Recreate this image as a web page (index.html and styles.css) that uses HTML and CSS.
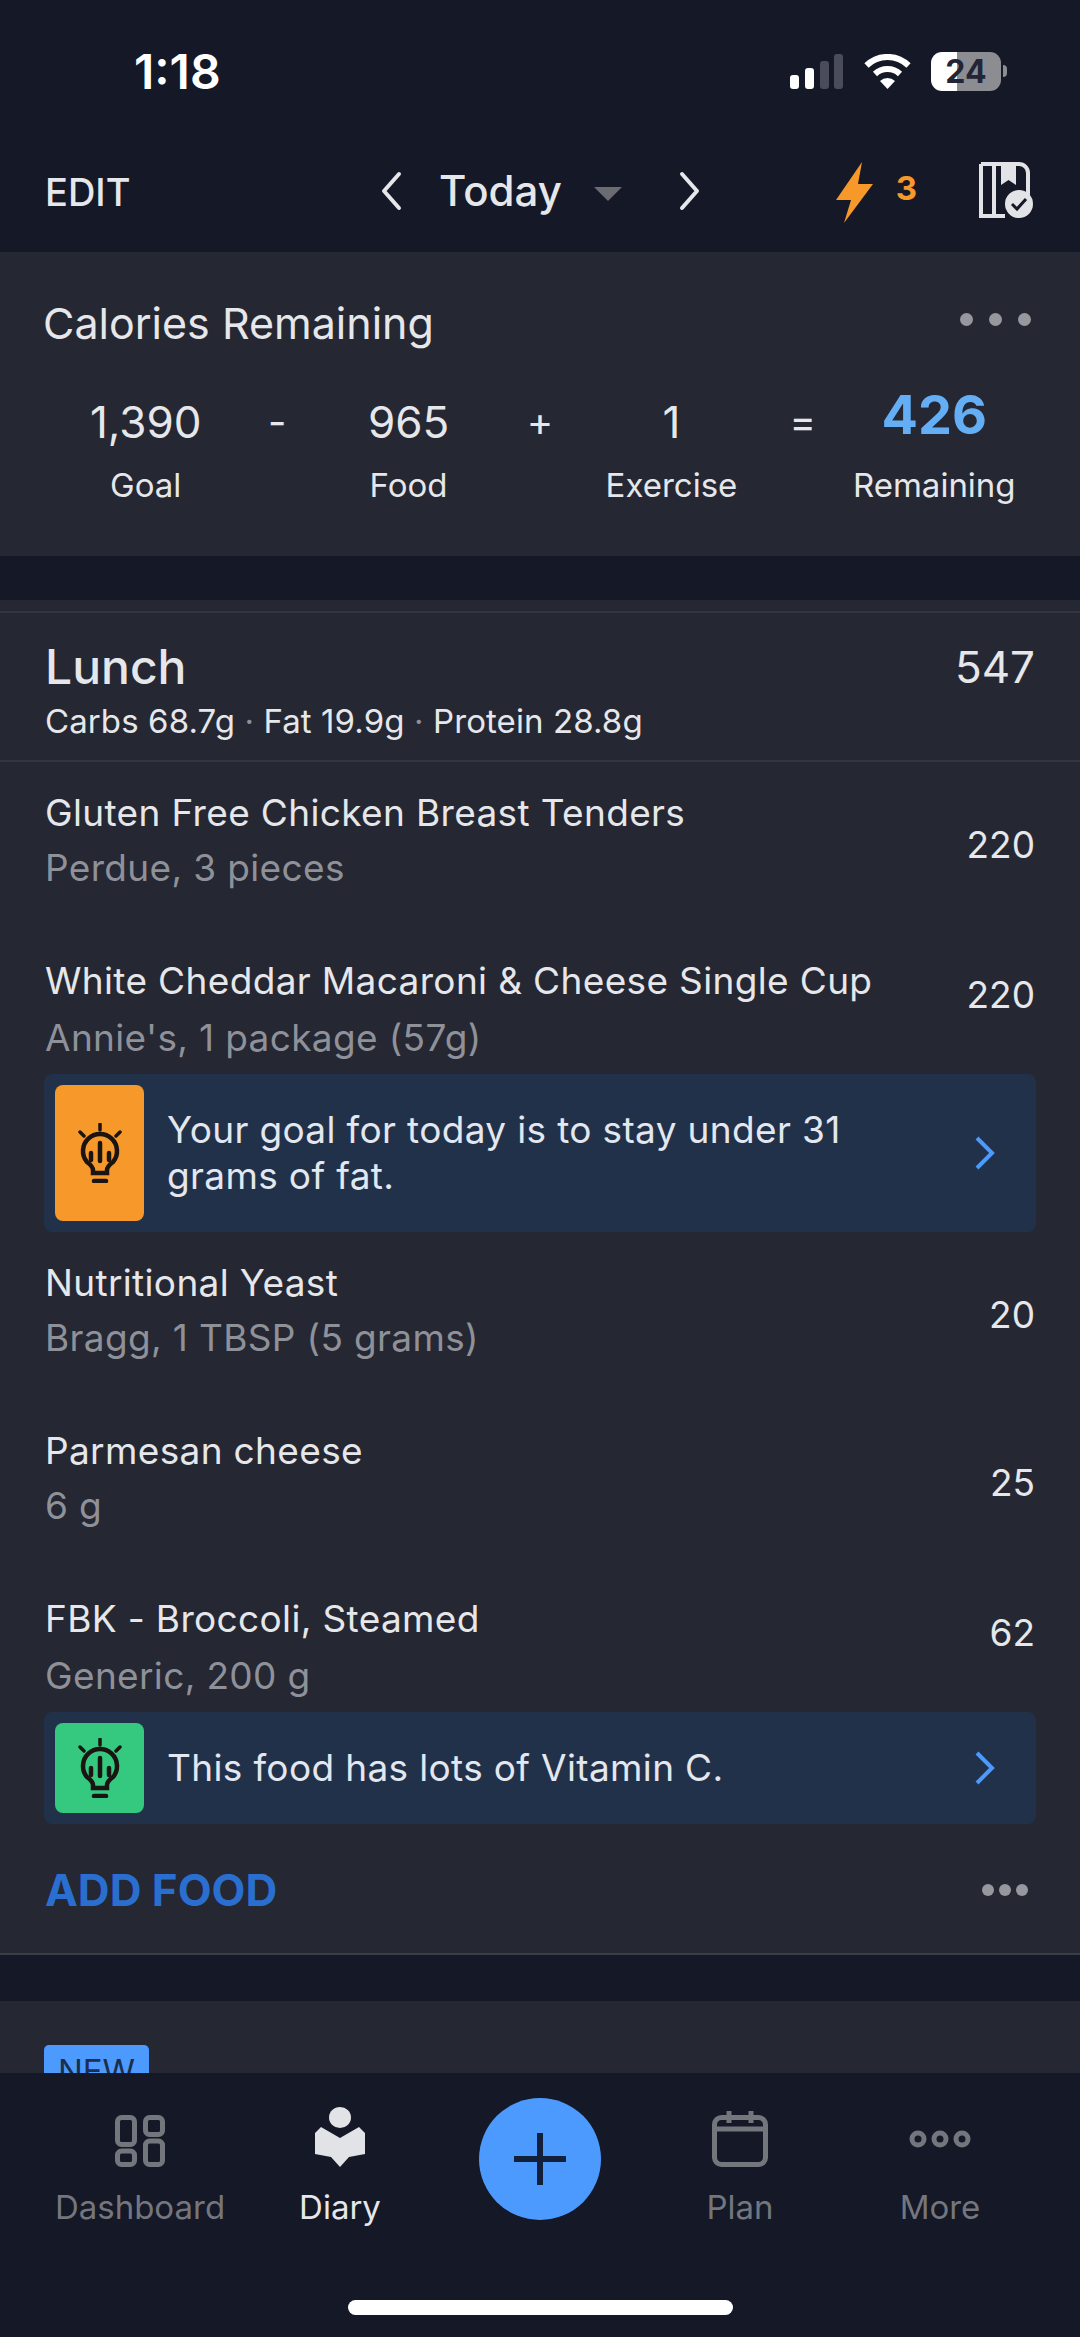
FILE: index.html
```html
<!DOCTYPE html>
<html>
<head>
  <meta charset="UTF-8">
  <title>Diary</title>
  <link rel="stylesheet" href="styles.css">
</head>
<body>
  <div class="page">
    <!-- status bar -->
    <div class="status">
      <span class="time">1:18</span>
      <div class="status-icons">
        <svg class="signal" width="53" height="35" viewBox="0 0 53 35">
          <rect x="0" y="21" width="9" height="14" rx="3" fill="#fff"/>
          <rect x="15" y="14" width="9" height="21" rx="3" fill="#fff"/>
          <rect x="30" y="7" width="9" height="28" rx="3" fill="#4a4d59"/>
          <rect x="44" y="0" width="9" height="35" rx="3" fill="#4a4d59"/>
        </svg>
        <svg class="wifi" width="47" height="35" viewBox="0 0 47 35">
          <path d="M2.500 11.500a30 30 0 0 1 42 0" fill="none" stroke="#fff" stroke-width="6"/>
          <path d="M11 20a18 18 0 0 1 25 0" fill="none" stroke="#fff" stroke-width="6"/>
          <path d="M23.500 35l-7.500-8a11 11 0 0 1 15 0z" fill="#fff"/>
        </svg>
        <div class="battery"><span>24</span></div>
        <div class="battery-nub"></div>
      </div>
    </div>

    <!-- top nav -->
    <div class="topbar">
      <span class="edit">EDIT</span>
      <div class="date-nav">
        <svg width="24" height="40" viewBox="0 0 24 40"><path d="M20 3L5 20l15 17" fill="none" stroke="#e6e7ea" stroke-width="4" stroke-linecap="round" stroke-linejoin="round"/></svg>
        <span class="today">Today</span>
        <div class="caret"></div>
        <svg width="24" height="40" viewBox="0 0 24 40"><path d="M4 3l15 17L4 37" fill="none" stroke="#e6e7ea" stroke-width="4" stroke-linecap="round" stroke-linejoin="round"/></svg>
      </div>
      <div class="top-right">
        <svg width="37" height="61" viewBox="0 0 37 61"><path d="M26 0L0 38h15L8 61l29-39H22z" fill="#f7982a"/></svg>
        <span class="streak">3</span>
        <svg class="book" width="54" height="56" viewBox="0 0 54 56">
          <path d="M2 2h38a9 9 0 0 1 9 9v24M26 54H2V2M15 3v49" fill="none" stroke="#e2e3e6" stroke-width="4"/>
          <path d="M22 3h15v20l-7.500-5-7.500 5z" fill="#e2e3e6"/>
          <circle cx="40" cy="42" r="14" fill="#e2e3e6"/>
          <path d="M33 42l5 5 9-10" fill="none" stroke="#151826" stroke-width="3"/>
        </svg>
      </div>
    </div>

    <div class="content">
      <!-- calories summary -->
      <section class="card summary">
        <div class="summary-head">
          <h2>Calories Remaining</h2>
          <div class="dots"><i></i><i></i><i></i></div>
        </div>
        <div class="calc">
          <div class="calc-col"><b>1,390</b><span>Goal</span></div>
          <div class="calc-op">-</div>
          <div class="calc-col"><b>965</b><span>Food</span></div>
          <div class="calc-op">+</div>
          <div class="calc-col"><b>1</b><span>Exercise</span></div>
          <div class="calc-op">=</div>
          <div class="calc-col calc-total"><b>426</b><span>Remaining</span></div>
        </div>
      </section>

      <!-- lunch -->
      <section class="card meal">
        <div class="meal-head">
          <div>
            <h2>Lunch</h2>
            <p>Carbs 68.7g <em>·</em> Fat 19.9g <em>·</em> Protein 28.8g</p>
          </div>
          <span class="meal-cal">547</span>
        </div>

        <div class="food">
          <div class="food-text"><div class="food-name">Gluten Free Chicken Breast Tenders</div><div class="food-sub">Perdue, 3 pieces</div></div>
          <span class="food-cal">220</span>
        </div>

        <div class="food has-tip">
          <div class="food-text"><div class="food-name">White Cheddar Macaroni &amp; Cheese Single Cup</div><div class="food-sub">Annie's, 1 package (57g)</div></div>
          <span class="food-cal">220</span>
        </div>
        <div class="tip">
          <div class="tip-icon orange">
            <svg width="44" height="60" viewBox="0 0 44 60"><use href="#bulb"/></svg>
          </div>
          <div class="tip-text">Your goal for today is to stay under 31 grams of fat.</div>
          <svg class="tip-arrow" width="22" height="36" viewBox="0 0 22 36"><path d="M3 3l15 15L3 33" fill="none" stroke="#4d9aff" stroke-width="4"/></svg>
        </div>

        <div class="food">
          <div class="food-text"><div class="food-name">Nutritional Yeast</div><div class="food-sub">Bragg, 1 TBSP (5 grams)</div></div>
          <span class="food-cal">20</span>
        </div>

        <div class="food">
          <div class="food-text"><div class="food-name">Parmesan cheese</div><div class="food-sub">6 g</div></div>
          <span class="food-cal">25</span>
        </div>

        <div class="food has-tip">
          <div class="food-text"><div class="food-name">FBK - Broccoli, Steamed</div><div class="food-sub">Generic, 200 g</div></div>
          <span class="food-cal">62</span>
        </div>
        <div class="tip">
          <div class="tip-icon green">
            <svg width="44" height="60" viewBox="0 0 44 60"><use href="#bulb"/></svg>
          </div>
          <div class="tip-text">This food has lots of Vitamin C.</div>
          <svg class="tip-arrow" width="22" height="36" viewBox="0 0 22 36"><path d="M3 3l15 15L3 33" fill="none" stroke="#4d9aff" stroke-width="4"/></svg>
        </div>

        <div class="add-row">
          <span class="add-food">ADD FOOD</span>
          <div class="dots small"><i></i><i></i><i></i></div>
        </div>
      </section>

      <section class="card next">
        <span class="badge">NEW</span>
      </section>
    </div>

    <!-- bottom tabs -->
    <nav class="tabs">
      <div class="tab">
        <svg width="50" height="52" viewBox="0 0 50 52" fill="none" stroke="#74767d" stroke-width="5">
          <rect x="2.500" y="2.500" width="17" height="27" rx="4"/>
          <rect x="30.500" y="2.500" width="17" height="17" rx="4"/>
          <rect x="2.500" y="36" width="17" height="13.500" rx="4"/>
          <rect x="30.500" y="26" width="17" height="23.500" rx="4"/>
        </svg>
        <span>Dashboard</span>
      </div>
      <div class="tab active">
        <svg width="52" height="60" viewBox="0 0 52 60" fill="#e2e3e6">
          <ellipse cx="26" cy="10.500" rx="11" ry="10.500"/>
          <path d="M1 26l6-6 19 11 19-11 6 6v21l-16 3-9 10-9-10-16-3z"/>
        </svg>
        <span>Diary</span>
      </div>
      <div class="tab">
        <div class="add-btn">
          <svg width="52" height="52" viewBox="0 0 52 52"><path d="M26 1v50M1 26h50" stroke="#13203b" stroke-width="6" stroke-linecap="round"/></svg>
        </div>
      </div>
      <div class="tab">
        <svg width="56" height="56" viewBox="0 0 56 56" fill="none" stroke="#74767d" stroke-width="5">
          <rect x="2.500" y="6.500" width="51" height="47" rx="7"/>
          <path d="M2.500 18h51M17 0v12M39 0v12"/>
        </svg>
        <span>Plan</span>
      </div>
      <div class="tab">
        <svg class="more-icon" width="62" height="18" viewBox="0 0 62 18" fill="none" stroke="#74767d" stroke-width="5">
          <circle cx="9" cy="9" r="6"/><circle cx="31" cy="9" r="6"/><circle cx="53" cy="9" r="6"/>
        </svg>
        <span>More</span>
      </div>
    </nav>
    <div class="home-bar"></div>
  </div>

  <!-- shared lightbulb -->
  <svg class="defs" width="0" height="0">
    <defs>
      <g id="bulb" fill="none" stroke="#1a1512" stroke-width="3.500" stroke-linecap="round">
        <path d="M22 1v6M2 9l4 4M42 9l-4 4"/>
        <path d="M15 50v-3c0-3-2-5-6-8a17 17 0 1 1 26 0c-4 3-6 5-6 8v3z" stroke-width="4.500"/>
        <path d="M16 58h12" stroke-width="4.500"/>
        <path d="M22 20v18M13 30v7M31 30v7" stroke-width="4.500"/>
      </g>
    </defs>
  </svg>
</body>
</html>
```

FILE: styles.css
```css
* {
  box-sizing: border-box;
}
body {
  margin: 0;
  font-family: Inter, 'Noto Sans', sans-serif;
  background: #151826;
  color: #e6e7ea;
}
h2, p {
  margin: 0;
  font-weight: 400;
}
.page {
  width: 1080px;
  height: 2337px;
  display: flex;
  flex-direction: column;
  overflow: hidden;
  position: relative;
}
.defs {
  position: absolute;
}

/* status bar */
.status {
  height: 142px;
  flex: none;
  display: flex;
  justify-content: space-between;
  align-items: center;
  padding: 0 73px 0 134px;
}
.time {
  font-size: 48px;
  font-weight: 600;
  color: #fff;
}
.status-icons {
  display: flex;
  align-items: center;
}
.wifi {
  margin-left: 21px;
}
.battery {
  margin-left: 20px;
  width: 70px;
  height: 39px;
  border-radius: 11px;
  background: linear-gradient(90deg, #fff 0, #fff 37%, #8c8d93 37%, #8c8d93 100%);
  display: flex;
  align-items: center;
  justify-content: center;
}
.battery span {
  font-size: 32px;
  font-weight: 700;
  color: #232536;
}
.battery-nub {
  width: 4px;
  height: 12px;
  margin-left: 2px;
  background: #8c8d93;
  border-radius: 0 4px 4px 0;
}

/* top nav */
.topbar {
  height: 110px;
  flex: none;
  padding: 0 47px 10px 45px;
  display: flex;
  align-items: center;
  justify-content: space-between;
  position: relative;
}
.edit {
  font-size: 38px;
  font-weight: 500;
}
.date-nav {
  display: flex;
  align-items: center;
  position: absolute;
  left: 379px;
  top: 23px;
}
.today {
  font-size: 42px;
  font-weight: 500;
  margin-left: 36px;
}
.caret {
  margin: 6px 56px 0 32px;
  border-left: 14px solid transparent;
  border-right: 14px solid transparent;
  border-top: 14px solid #6b6c72;
}
.top-right {
  display: flex;
  align-items: center;
}
.streak {
  font-size: 33px;
  font-weight: 700;
  color: #f7982a;
  margin-left: 23px;
  margin-bottom: 8px;
}
.book {
  margin-left: 62px;
  margin-top: -4px;
}

/* cards */
.content {
  flex: 1;
  overflow: hidden;
}
.card {
  background: #252733;
}
.summary {
  height: 304px;
  padding: 48px 49px 0 43px;
  margin-bottom: 44px;
}
.summary-head {
  display: flex;
  justify-content: space-between;
  align-items: center;
}
.summary-head h2 {
  font-size: 43px;
  font-weight: 400;
  line-height: 46px;
}
.dots {
  display: flex;
  gap: 16px;
  margin-top: -8px;
}
.dots i {
  width: 13px;
  height: 13px;
  border-radius: 50%;
  background: #97989e;
}
.dots.small {
  gap: 5px;
  margin-top: 0;
}
.dots.small i {
  width: 12px;
  height: 12px;
}
.calc {
  display: grid;
  grid-template-columns: repeat(7, minmax(0, 1fr));
  margin: 46px -49px 0 -43px;
  padding: 0 80px;
}
.calc-col {
  display: flex;
  flex-direction: column;
  align-items: center;
}
.calc-col b {
  height: 60px;
  line-height: 60px;
  font-size: 44px;
  font-weight: 400;
}
.calc-col span {
  margin-top: 13px;
  font-size: 33px;
  line-height: 40px;
  white-space: nowrap;
}
.calc-total b {
  font-size: 54px;
  font-weight: 700;
  color: #64aef5;
  margin-top: -7px;
  margin-bottom: 7px;
}
.calc-op {
  height: 60px;
  line-height: 60px;
  text-align: center;
  font-size: 40px;
}

/* meal */
.meal {
  padding-top: 11px;
  border-bottom: 2px solid #3a3c46;
  margin-bottom: 46px;
}
.meal::before {
  content: "";
  display: block;
  height: 2px;
  background: #33353f;
}
.meal-head {
  height: 149px;
  padding: 25px 45px 0;
  display: flex;
  justify-content: space-between;
  border-bottom: 2px solid #33353f;
}
.meal-head h2 {
  font-size: 48px;
  font-weight: 500;
  line-height: 58px;
}
.meal-head p {
  font-size: 33px;
  line-height: 40px;
  margin-top: 5px;
  letter-spacing: 0.1px;
}
.meal-head em {
  font-style: normal;
  color: #8f9199;
}
.meal-cal {
  font-size: 44px;
  line-height: 58px;
}
.food {
  padding: 28px 45px 39px;
  display: flex;
  justify-content: space-between;
  align-items: center;
}
.food-name {
  font-size: 37px;
  line-height: 46px;
  letter-spacing: 0.35px;
}
.food-sub {
  font-size: 37px;
  line-height: 46px;
  margin-top: 9px;
  color: #8f9199;
  letter-spacing: 0.35px;
}
.food-cal {
  font-size: 37px;
  margin-top: 8px;
}
.has-tip {
  padding-bottom: 13px;
}
.has-tip .food-sub {
  margin-top: 11px;
}
.has-tip .food-cal {
  margin-top: 0;
  margin-bottom: 30px;
}
.tip {
  margin: 0 44px;
  padding: 11px;
  background: #22314a;
  border-radius: 8px;
  display: flex;
  align-items: stretch;
}
.tip-icon {
  width: 89px;
  min-height: 90px;
  flex: none;
  border-radius: 8px;
  display: flex;
  align-items: center;
  justify-content: center;
}
.orange {
  background: #f7982a;
}
.green {
  background: #35c97f;
}
.tip-text {
  flex: 1;
  font-size: 37px;
  line-height: 46px;
  padding: 22px 60px 22px 23px;
  letter-spacing: 0.35px;
  color: #e3e7ef;
}
.tip-arrow {
  align-self: center;
  margin-right: 29px;
  flex: none;
}
.add-row {
  height: 129px;
  padding: 2px 52px 0 45px;
  display: flex;
  justify-content: space-between;
  align-items: center;
}
.add-food {
  font-size: 44px;
  font-weight: 700;
  color: #2a6fd0;
}
.next {
  height: 200px;
  padding: 44px 44px 0;
}
.badge {
  display: inline-block;
  width: 105px;
  height: 50px;
  padding-top: 8px;
  text-align: center;
  background: #4d9aff;
  border-radius: 5px;
  font-size: 33px;
  line-height: 36px;
  font-weight: 400;
  color: #1d2d4c;
}

/* bottom tabs */
.tabs {
  height: 264px;
  flex: none;
  padding: 0 40px;
  background: #151826;
  display: grid;
  grid-template-columns: repeat(5, 1fr);
}
.tab {
  height: 154px;
  display: flex;
  flex-direction: column;
  align-items: center;
  justify-content: flex-end;
  font-size: 33px;
  line-height: 40px;
  color: #74767d;
}
.tab svg {
  margin-bottom: 20px;
}
.tab.active {
  color: #e6e7ea;
}
.tab .more-icon {
  margin-bottom: 39px;
}
.add-btn {
  width: 122px;
  height: 122px;
  margin-bottom: 7px;
  border-radius: 50%;
  background: #4d9aff;
  display: flex;
  align-items: center;
  justify-content: center;
}
.add-btn svg {
  margin: 0;
}
.home-bar {
  position: absolute;
  left: 348px;
  top: 2300px;
  width: 385px;
  height: 15px;
  border-radius: 8px;
  background: #fff;
}
```
